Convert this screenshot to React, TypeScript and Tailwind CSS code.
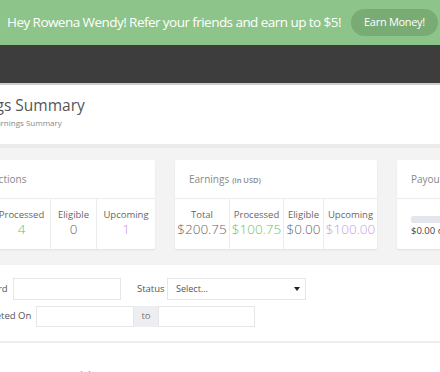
// --- small pieces ---

type Stat = { label: string; value: string; color: string; width: string };

const transactionStats: Stat[] = [
  { label: "Total", value: "5", color: "text-[#666]", width: "w-[39px]" },
  { label: "Processed", value: "4", color: "text-[#6cbf69]", width: "w-[58px]" },
  { label: "Eligible", value: "0", color: "text-[#666]", width: "w-[46px]" },
  { label: "Upcoming", value: "1", color: "text-[#c79ae6]", width: "flex-1" },
];

const earningStats: Stat[] = [
  { label: "Total", value: "$200.75", color: "text-[#666]", width: "w-[54px]" },
  { label: "Processed", value: "$100.75", color: "text-[#6cbf69]", width: "w-[54px]" },
  { label: "Eligible", value: "$0.00", color: "text-[#666]", width: "w-[40px]" },
  { label: "Upcoming", value: "$100.00", color: "text-[#c79ae6]", width: "flex-1" },
];

function StatCard({ title, sub, stats }: { title: string; sub?: string; stats: Stat[] }) {
  return (
    <div className="w-[202px] h-[89px] shrink-0 bg-white rounded-[2px] shadow-[0_1px_2px_rgba(0,0,0,0.08)] flex flex-col">
      <div className="h-[39px] border-b border-[#ececec] flex items-center pl-[14px]">
        <span className="text-[10px] text-[#888]">
          {title}
          {sub && <span className="ml-[3px] text-[7.5px] font-semibold text-[#888]">{sub}</span>}
        </span>
      </div>
      <div className="flex-1 flex">
        {stats.map((s, i) => (
          <div
            key={s.label}
            className={`${s.width} ${i > 0 ? "border-l border-[#ececec]" : ""} flex flex-col items-center pt-[10px]`}
          >
            <span className="text-[9.5px] leading-[12px] text-[#666]">{s.label}</span>
            <span className={`text-[13.5px] leading-[17px] font-light ${s.color}`}>{s.value}</span>
          </div>
        ))}
      </div>
    </div>
  );
}

export default function App() {
  return (
    <div className="w-[440px] h-[372px] overflow-hidden bg-white font-['Open_Sans','Noto_Sans',sans-serif]">
      {/* referral banner */}
      <div className="h-[45px] bg-[#8dc489] flex items-center justify-between pl-[7px] pr-[2px]">
        <span className="text-white text-[13.5px] whitespace-nowrap tracking-[-0.55px]">
          Hey Rowena Wendy! Refer your friends and earn up to $5!
        </span>
        <button className="shrink-0 h-[27px] w-[87px] rounded-full bg-[#79ab75] text-white text-[11px] whitespace-nowrap tracking-[-0.3px]">
          Earn Money!
        </button>
      </div>

      {/* top nav */}
      <div className="h-[38px] bg-[#3d3d3d]" />
      <div className="h-[2px] bg-[#cfcfcf]" />

      <div className="-ml-[67px] w-[800px]">
        {/* page header */}
        <div className="px-[20px] pt-[8px] h-[59px]">
          <h1 className="-ml-[4px] text-[15.5px] leading-[24px] text-[#555] whitespace-nowrap">Earnings Summary</h1>
          <div className="text-[8px] leading-[12px] text-[#888] whitespace-nowrap pl-[9px]">
            Home / Earnings Summary
          </div>
        </div>

        {/* summary cards */}
        <div className="bg-[#f3f3f3] border-t-[4px] border-[#ebebeb] px-[20px] pt-[12px] pb-[16px] flex gap-[20px]">
          <StatCard title="Transactions" stats={transactionStats} />
          <StatCard title="Earnings" sub="(in USD)" stats={earningStats} />
          <div className="w-[202px] h-[89px] shrink-0 bg-white rounded-[2px] shadow-[0_1px_2px_rgba(0,0,0,0.08)] flex flex-col">
            <div className="h-[39px] border-b border-[#ececec] flex items-center pl-[14px] text-[10px] text-[#888]">
              Payout
            </div>
            <div className="px-[14px] pt-[17px]">
              <div className="h-[7px] rounded-[2px] bg-[#e3e7ed]" />
              <div className="mt-[2px] text-[9.5px] leading-[12px] text-[#444]">$0.00 of $50.00</div>
            </div>
          </div>
        </div>

        {/* filters */}
        <div className="pl-[34px] pt-[13px] pb-[14px] border-b-2 border-[#eeeeee] flex flex-col gap-[6px] text-[9.5px] text-[#555]">
          <div className="flex items-center">
            <span className="ml-[2px] w-[44px] whitespace-nowrap">Keyword</span>
            <div className="w-[108px] h-[22px] border border-[#e6e6e6] bg-white" />
            <span className="w-[30px] ml-[16px]">Status</span>
            <div className="w-[139px] h-[22px] border border-[#e6e6e6] bg-white flex items-center justify-between pl-[8px] pr-[5px]">
              <span className="text-[9px]">Select...</span>
              <span className="w-0 h-0 border-l-[3px] border-r-[3px] border-t-[4px] border-l-transparent border-r-transparent border-t-[#222]" />
            </div>
          </div>
          <div className="flex items-center">
            <span className="w-[69px]">Completed On</span>
            <div className="w-[98px] h-[21px] border border-[#e6e6e6] bg-white" />
            <div className="w-[24px] h-[21px] bg-[#eceef1] flex items-center justify-center text-[#777]">to</div>
            <div className="w-[97px] h-[21px] border border-[#e6e6e6] bg-white" />
          </div>
        </div>

        {/* table header, mostly below the fold */}
        <div className="pt-[26px] flex text-[12px] leading-[16px] font-semibold text-[#aaa]">
          <span className="w-[206px] pl-[140px]">Title</span>
          <span className="w-[100px] pl-[34px]">Date</span>
          <span className="w-[120px] pl-[30px]">Amount</span>
          <span className="w-[120px] pl-[20px]">Status</span>
        </div>
      </div>
    </div>
  );
}
